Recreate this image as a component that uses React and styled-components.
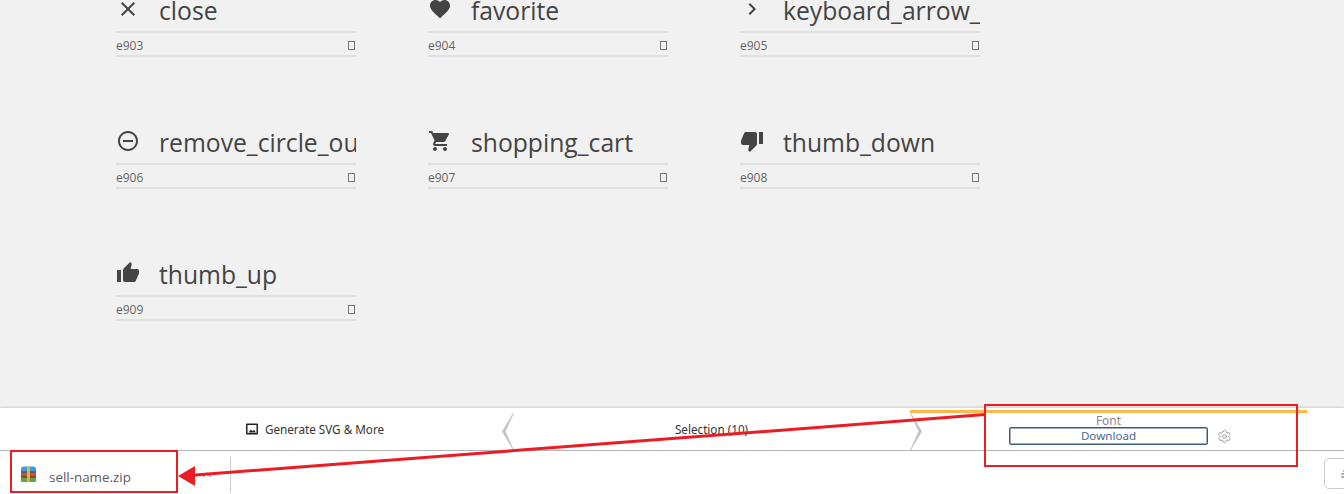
import React from "react";
import styled, { createGlobalStyle } from "styled-components";
import { Settings } from "lucide-react";

const GlobalStyle = createGlobalStyle`
  html, body {
    margin: 0;
    padding: 0;
    background: #f1f1f1;
    overflow: hidden;
  }
`;

const Page = styled.div`
  position: relative;
  width: 1344px;
  height: 494px;
  display: flex;
  flex-direction: column;
  overflow: hidden;
  font-family: "Open Sans", "Noto Sans", sans-serif;
`;
const Main = styled.main`
  flex: 1;
  min-height: 0;
  overflow: hidden;
`;
const GlyphGrid = styled.div`
  display: grid;
  grid-template-columns: repeat(3, 240px);
  column-gap: 72px;
  row-gap: 71px;
  margin: -4px 0 0 116px;
`;
const GlyphCell = styled.div`
  width: 240px;
`;
const GlyphTitle = styled.div`
  display: flex;
  height: 35px;
  overflow: hidden;
  color: #444;
`;
const GlyphIcon = styled.svg`
  flex: none;
  width: 24px;
  height: 24px;
  margin-top: 1px;
  fill: #444;
`;
const GlyphName = styled.span`
  margin-left: 19px;
  font-size: 24.7px;
  line-height: 29px;
  white-space: nowrap;
`;
const GlyphField = styled.div`
  display: flex;
  align-items: center;
  justify-content: space-between;
  height: 20px;
  padding-top: 2px;
  border-top: 2px solid #e0e0e0;
  border-bottom: 2px solid #e0e0e0;
  font-size: 12px;
  color: #666;
`;
const Tofu = styled.span`
  width: 5px;
  height: 7px;
  margin: 1px 1px 0 0;
  border: 1px solid #777;
`;

const Footer = styled.footer`
  flex: none;
  height: 43px;
  box-sizing: border-box;
  display: grid;
  grid-template-columns: repeat(3, 397px);
  padding-left: 116px;
  background: #fff;
  border-bottom: 1px solid #b4b4b4;
  box-shadow: 0 -1px 2px rgba(0, 0, 0, 0.15);
  font-family: "Noto Sans", sans-serif;
  color: #333;
`;
const Tab = styled.div`
  position: relative;
  display: flex;
  align-items: center;
  justify-content: center;
  gap: 6px;
  font-size: 11.7px;
  padding-bottom: 1px;
`;
const TabIcon = styled.svg`
  width: 14px;
  height: 14px;
`;
const Chevron = styled.svg`
  position: absolute;
  top: 5px;
  ${(p) => (p.$side === "left" ? "left: -11px;" : "right: -12px;")}
  width: 12px;
  height: 37px;
  fill: #c4c4c4;
`;
const FontTab = styled.div`
  display: flex;
  flex-direction: column;
  align-items: center;
  padding-top: 2px;
  border-top: 3px solid #ffb84d;
  margin-top: 2px;
`;
const FontLabel = styled.div`
  font-size: 12px;
  line-height: 12px;
  color: #888;
`;
const DownloadRow = styled.div`
  display: flex;
  align-items: center;
  gap: 9px;
  margin-left: 24px;
`;
const DownloadButton = styled.button`
  width: 199px;
  height: 18px;
  padding: 0;
  box-sizing: border-box;
  background: #fff;
  border: 1px solid #3f5b7a;
  box-shadow: inset 0 0 0 0.5px #3f5b7a;
  border-radius: 2px;
  font-family: inherit;
  font-size: 11.6px;
  line-height: 14px;
  color: #4c6a8a;
`;
const GearIcon = styled(Settings)`
  flex: none;
  width: 15px;
  height: 15px;
  color: #999;
  stroke-width: 1.5;
`;

const Shelf = styled.div`
  flex: none;
  height: 43px;
  box-sizing: border-box;
  padding-top: 6px;
  display: flex;
  align-items: flex-start;
  background: #fff;
  font-family: "Open Sans", "Noto Sans", sans-serif;
`;
const FileItem = styled.div`
  display: flex;
  width: 210px;
  padding: 9px 0 0 20px;
  box-sizing: border-box;
  font-size: 13.4px;
  color: #5a5a5a;
`;
const FileIcon = styled.svg`
  flex: none;
  width: 17px;
  height: 17px;
`;
const FileName = styled.span`
  margin: 2px 0 0 12px;
  line-height: 18px;
`;
const ExpandCaret = styled.svg`
  position: absolute;
  left: 202px;
  top: 472px;
  width: 10px;
  height: 6px;
  fill: none;
  stroke: #999;
  stroke-width: 1.2;
`;
const ShelfDivider = styled.div`
  width: 1px;
  height: 36px;
  margin-left: 20px;
  background: #ccc;
`;
const ShowAllButton = styled.div`
  margin: 1px -20px 0 auto;
  width: 40px;
  height: 31px;
  border: 1px solid #ccc;
  border-radius: 5px;
  display: flex;
  align-items: center;
  padding-left: 15px;
  box-sizing: border-box;
  overflow: hidden;
`;
const ShowAllIcon = styled.svg`
  flex: none;
  width: 12px;
  height: 12px;
  stroke: #666;
  stroke-width: 1;
`;

const Annotations = styled.svg`
  position: absolute;
  inset: 0;
  width: 1344px;
  height: 494px;
  pointer-events: none;
`;

const glyphs = [
  { name: "close", code: "e903", d: "M19 6.41L17.59 5 12 10.59 6.41 5 5 6.41 10.59 12 5 17.59 6.41 19 12 13.41 17.59 19 19 17.59 13.41 12z" },
  { name: "favorite", code: "e904", d: "M12 21.35l-1.45-1.32C5.4 15.36 2 12.28 2 8.5 2 5.42 4.42 3 7.5 3c1.74 0 3.41.81 4.5 2.09C13.09 3.81 14.76 3 16.5 3 19.58 3 22 5.42 22 8.5c0 3.78-3.4 6.86-8.55 11.54L12 21.35z" },
  { name: "keyboard_arrow_right", code: "e905", d: "M8.59 16.59L13.17 12 8.59 7.41 10 6l6 6-6 6z" },
  { name: "remove_circle_outline", code: "e906", d: "M7 11v2h10v-2H7zm5-9C6.48 2 2 6.48 2 12s4.48 10 10 10 10-4.48 10-10S17.52 2 12 2zm0 18c-4.41 0-8-3.59-8-8s3.59-8 8-8 8 3.59 8 8-3.59 8-8 8z" },
  { name: "shopping_cart", code: "e907", d: "M7 18c-1.1 0-1.99.9-1.99 2S5.9 22 7 22s2-.9 2-2-.9-2-2-2zM1 2v2h2l3.6 7.59-1.35 2.45c-.16.28-.25.61-.25.96 0 1.1.9 2 2 2h12v-2H7.42c-.14 0-.25-.11-.25-.25l.03-.12.9-1.63h7.45c.75 0 1.41-.41 1.75-1.03l3.58-6.49c.08-.14.12-.31.12-.48 0-.55-.45-1-1-1H5.21l-.94-2H1zm16 16c-1.1 0-1.99.9-1.99 2s.89 2 1.99 2 2-.9 2-2-.9-2-2-2z" },
  { name: "thumb_down", code: "e908", d: "M15 3H6c-.83 0-1.54.5-1.84 1.22l-3.02 7.05c-.09.23-.14.47-.14.73v2c0 1.1.9 2 2 2h6.31l-.95 4.57-.03.32c0 .41.17.79.44 1.06L9.83 23l6.59-6.59c.36-.36.58-.86.58-1.41V5c0-1.1-.9-2-2-2zm4 0v12h4V3h-4z" },
  { name: "thumb_up", code: "e909", d: "M1 21h4V9H1v12zm22-11c0-1.1-.9-2-2-2h-6.31l.95-4.57.03-.32c0-.41-.17-.79-.44-1.06L14.17 1 7.59 7.59C7.22 7.95 7 8.45 7 9v10c0 1.1.9 2 2 2h9c.83 0 1.54-.5 1.84-1.22l3.02-7.05c.09-.23.14-.47.14-.73v-2z" },
];

const App = () => {
  return (
    <Page>
      <GlobalStyle />
      <Main>
        <GlyphGrid>
          {glyphs.map((g) => (
            <GlyphCell key={g.code}>
              <GlyphTitle>
                <GlyphIcon viewBox="0 0 24 24">
                  <path d={g.d} />
                </GlyphIcon>
                <GlyphName>{g.name}</GlyphName>
              </GlyphTitle>
              <GlyphField>
                {g.code}
                <Tofu />
              </GlyphField>
            </GlyphCell>
          ))}
        </GlyphGrid>
      </Main>

      <Footer>
        <Tab>
          <TabIcon viewBox="0 0 14 14">
            <rect x="1" y="1.5" width="12" height="11" rx="1" fill="#222" />
            <rect x="2.5" y="3" width="9" height="8" fill="#fff" />
            <path d="M3.5 10.5 6 7.5l1.6 1.7L9 7.8l2 2.7z" fill="#222" />
          </TabIcon>
          Generate SVG &amp; More
        </Tab>
        <Tab>
          <Chevron $side="left" viewBox="0 0 12 36" preserveAspectRatio="none">
            <path d="M11 0h1L3.5 18 12 36h-1L0 18z" />
          </Chevron>
          Selection (10)
          <Chevron $side="right" viewBox="0 0 12 36" preserveAspectRatio="none">
            <path d="M1 0H0l8.5 18L0 36h1l11-18z" />
          </Chevron>
        </Tab>
        <FontTab>
          <FontLabel>Font</FontLabel>
          <DownloadRow>
            <DownloadButton>Download</DownloadButton>
            <GearIcon />
          </DownloadRow>
        </FontTab>
      </Footer>

      <Shelf>
        <FileItem>
          <FileIcon viewBox="0 0 17 17">
            <path d="M1 6V3a2.5 2.5 0 0 1 2.5-2.5h10A2.5 2.5 0 0 1 16 3v3z" fill="#3aa0dc" />
            <rect x="1" y="6" width="15" height="5" fill="#c8553a" />
            <rect x="1" y="11" width="15" height="5" rx="1" fill="#5ba63f" />
            <rect x="1" y="5.5" width="15" height="1" fill="#1d4f78" />
            <rect x="1" y="10.5" width="15" height="1" fill="#4a3020" />
            <rect x="7" y="0.5" width="3" height="15.5" fill="#e0b050" />
          </FileIcon>
          <FileName>sell-name.zip</FileName>
        </FileItem>
        <ExpandCaret viewBox="0 0 10 6">
          <path d="M1 5l4-4 4 4" />
        </ExpandCaret>
        <ShelfDivider />
        <ShowAllButton>
          <ShowAllIcon viewBox="0 0 12 12">
            <path d="M3 3h9M1 6h11M1 9h11" />
          </ShowAllIcon>
        </ShowAllButton>
      </Shelf>

      <Annotations viewBox="0 0 1344 494">
        <g fill="none" stroke="#ec1c24" strokeWidth="2">
          <rect x="985" y="405" width="312" height="61" />
          <rect x="11" y="451" width="166" height="41" />
        </g>
        <line x1="985" y1="414.6" x2="192" y2="475.2" stroke="#ec1c24" strokeWidth="3" />
        <path d="M178 476L195 466L195 486z" fill="#ec1c24" />
      </Annotations>
    </Page>
  );
};

export default App;
